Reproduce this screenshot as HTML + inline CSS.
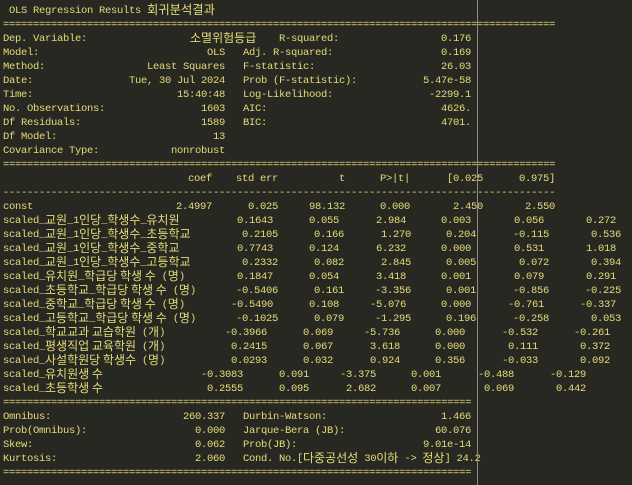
<!DOCTYPE html>
<html><head><meta charset="utf-8"><style>
html,body{margin:0;padding:0;background:#272822;}
body{width:632px;height:485px;position:relative;overflow:hidden;font-family:"Liberation Mono","Noto Sans CJK KR",monospace;font-size:10.5px;letter-spacing:-0.3px;color:#e6db78;}
.l{position:absolute;left:0;width:632px;height:14px;line-height:14px;white-space:pre;}
.l span{position:absolute;top:0;white-space:pre;line-height:14px;}
.l span.k{position:relative;top:1px;line-height:0;letter-spacing:0;font-family:"Noto Sans CJK KR","NanumGothic",sans-serif;font-size:12px;vertical-align:baseline;}
.vl{position:absolute;left:477px;top:0;width:1px;height:485px;background:#8d8c82;}
</style></head><body>
<div class="l" style="top:4px"><span style="left:3px"> OLS Regression Results <span class="k" style="font-size:12.3px">회귀분석결과</span></span></div>
<div class="l" style="top:18px"><span style="left:3px">============================================================================================</span></div>
<div class="l" style="top:32px"><span style="left:3px">Dep. Variable:</span><span style="left:190px"><span class="k" style="font-size:12px">소멸위험등급</span></span><span style="left:279px">R-squared:</span><span style="right:161px">0.176</span></div>
<div class="l" style="top:46px"><span style="left:3px">Model:</span><span style="right:407px">OLS</span><span style="left:243px">Adj. R-squared:</span><span style="right:161px">0.169</span></div>
<div class="l" style="top:60px"><span style="left:3px">Method:</span><span style="right:407px">Least Squares</span><span style="left:243px">F-statistic:</span><span style="right:161px">26.03</span></div>
<div class="l" style="top:74px"><span style="left:3px">Date:</span><span style="right:407px">Tue, 30 Jul 2024</span><span style="left:243px">Prob (F-statistic):</span><span style="right:161px">5.47e-58</span></div>
<div class="l" style="top:88px"><span style="left:3px">Time:</span><span style="right:407px">15:40:48</span><span style="left:243px">Log-Likelihood:</span><span style="right:161px">-2299.1</span></div>
<div class="l" style="top:102px"><span style="left:3px">No. Observations:</span><span style="right:407px">1603</span><span style="left:243px">AIC:</span><span style="right:161px">4626.</span></div>
<div class="l" style="top:116px"><span style="left:3px">Df Residuals:</span><span style="right:407px">1589</span><span style="left:243px">BIC:</span><span style="right:161px">4701.</span></div>
<div class="l" style="top:130px"><span style="left:3px">Df Model:</span><span style="right:407px">13</span></div>
<div class="l" style="top:144px"><span style="left:3px">Covariance Type:</span><span style="right:407px">nonrobust</span></div>
<div class="l" style="top:158px"><span style="left:3px">============================================================================================</span></div>
<div class="l" style="top:172px"><span style="right:420px">coef</span><span style="right:354px">std err</span><span style="right:287px">t</span><span style="right:222px">P&gt;|t|</span><span style="right:149px">[0.025</span><span style="right:77px">0.975]</span></div>
<div class="l" style="top:186px"><span style="left:3px">--------------------------------------------------------------------------------------------</span></div>
<div class="l" style="top:200px"><span style="left:3px">const</span><span style="right:420px">2.4997</span><span style="right:354px">0.025</span><span style="right:287px">98.132</span><span style="right:222px">0.000</span><span style="right:149px">2.450</span><span style="right:77px">2.550</span></div>

<div class="l" style="top:214px"><span style="left:3px">scaled_<span class="k">교원</span>_1<span class="k">인당</span>_<span class="k">학생수</span>_<span class="k">유치원</span></span><span style="right:359px">0.1643</span><span style="right:293px">0.055</span><span style="right:226px">2.984</span><span style="right:161px">0.003</span><span style="right:88px">0.056</span><span style="right:16px">0.272</span></div>
<div class="l" style="top:228px"><span style="left:3px">scaled_<span class="k">교원</span>_1<span class="k">인당</span>_<span class="k">학생수</span>_<span class="k">초등학교</span></span><span style="right:354px">0.2105</span><span style="right:288px">0.166</span><span style="right:221px">1.270</span><span style="right:156px">0.204</span><span style="right:83px">-0.115</span><span style="right:11px">0.536</span></div>
<div class="l" style="top:242px"><span style="left:3px">scaled_<span class="k">교원</span>_1<span class="k">인당</span>_<span class="k">학생수</span>_<span class="k">중학교</span></span><span style="right:359px">0.7743</span><span style="right:293px">0.124</span><span style="right:226px">6.232</span><span style="right:161px">0.000</span><span style="right:88px">0.531</span><span style="right:16px">1.018</span></div>
<div class="l" style="top:256px"><span style="left:3px">scaled_<span class="k">교원</span>_1<span class="k">인당</span>_<span class="k">학생수</span>_<span class="k">고등학교</span></span><span style="right:354px">0.2332</span><span style="right:288px">0.082</span><span style="right:221px">2.845</span><span style="right:156px">0.005</span><span style="right:83px">0.072</span><span style="right:11px">0.394</span></div>
<div class="l" style="top:270px"><span style="left:3px">scaled_<span class="k">유치원</span>_<span class="k">학급당 학생 수</span> (<span class="k">명</span>)</span><span style="right:359px">0.1847</span><span style="right:293px">0.054</span><span style="right:226px">3.418</span><span style="right:161px">0.001</span><span style="right:88px">0.079</span><span style="right:16px">0.291</span></div>
<div class="l" style="top:284px"><span style="left:3px">scaled_<span class="k">초등학교</span>_<span class="k">학급당 학생 수</span> (<span class="k">명</span>)</span><span style="right:354px">-0.5406</span><span style="right:288px">0.161</span><span style="right:221px">-3.356</span><span style="right:156px">0.001</span><span style="right:83px">-0.856</span><span style="right:11px">-0.225</span></div>
<div class="l" style="top:298px"><span style="left:3px">scaled_<span class="k">중학교</span>_<span class="k">학급당 학생 수</span> (<span class="k">명</span>)</span><span style="right:359px">-0.5490</span><span style="right:293px">0.108</span><span style="right:226px">-5.076</span><span style="right:161px">0.000</span><span style="right:88px">-0.761</span><span style="right:16px">-0.337</span></div>
<div class="l" style="top:312px"><span style="left:3px">scaled_<span class="k">고등학교</span>_<span class="k">학급당 학생 수</span> (<span class="k">명</span>)</span><span style="right:354px">-0.1025</span><span style="right:288px">0.079</span><span style="right:221px">-1.295</span><span style="right:156px">0.196</span><span style="right:83px">-0.258</span><span style="right:11px">0.053</span></div>
<div class="l" style="top:326px"><span style="left:3px">scaled_<span class="k">학교교과 교습학원</span> (<span class="k">개</span>)</span><span style="right:365px">-0.3966</span><span style="right:299px">0.069</span><span style="right:232px">-5.736</span><span style="right:167px">0.000</span><span style="right:94px">-0.532</span><span style="right:22px">-0.261</span></div>
<div class="l" style="top:340px"><span style="left:3px">scaled_<span class="k">평생직업 교육학원</span> (<span class="k">개</span>)</span><span style="right:365px">0.2415</span><span style="right:299px">0.067</span><span style="right:232px">3.618</span><span style="right:167px">0.000</span><span style="right:94px">0.111</span><span style="right:22px">0.372</span></div>
<div class="l" style="top:354px"><span style="left:3px">scaled_<span class="k">사설학원당 학생수</span> (<span class="k">명</span>)</span><span style="right:365px">0.0293</span><span style="right:299px">0.032</span><span style="right:232px">0.924</span><span style="right:167px">0.356</span><span style="right:94px">-0.033</span><span style="right:22px">0.092</span></div>
<div class="l" style="top:368px"><span style="left:3px">scaled_<span class="k">유치원생 수</span></span><span style="right:389px">-0.3083</span><span style="right:323px">0.091</span><span style="right:256px">-3.375</span><span style="right:191px">0.001</span><span style="right:118px">-0.488</span><span style="right:46px">-0.129</span></div>
<div class="l" style="top:382px"><span style="left:3px">scaled_<span class="k">초등학생 수</span></span><span style="right:389px">0.2555</span><span style="right:323px">0.095</span><span style="right:256px">2.682</span><span style="right:191px">0.007</span><span style="right:118px">0.069</span><span style="right:46px">0.442</span></div>
<div class="l" style="top:396px"><span style="left:3px">==============================================================================</span></div>
<div class="l" style="top:410px"><span style="left:3px">Omnibus:</span><span style="right:407px">260.337</span><span style="left:243px">Durbin-Watson:</span><span style="right:161px">1.466</span></div>
<div class="l" style="top:424px"><span style="left:3px">Prob(Omnibus):</span><span style="right:407px">0.000</span><span style="left:243px">Jarque-Bera (JB):</span><span style="right:161px">60.076</span></div>
<div class="l" style="top:438px"><span style="left:3px">Skew:</span><span style="right:407px">0.062</span><span style="left:243px">Prob(JB):</span><span style="right:161px">9.01e-14</span></div>
<div class="l" style="top:452px"><span style="left:3px">Kurtosis:</span><span style="right:407px">2.060</span><span style="left:243px">Cond. No.[<span class="k">다중공선성</span> 30<span class="k">이하</span> -&gt; <span class="k">정상</span>] 24.2</span></div>
<div class="l" style="top:466px"><span style="left:3px">==============================================================================</span></div>
<div class="vl"></div>
</body></html>
